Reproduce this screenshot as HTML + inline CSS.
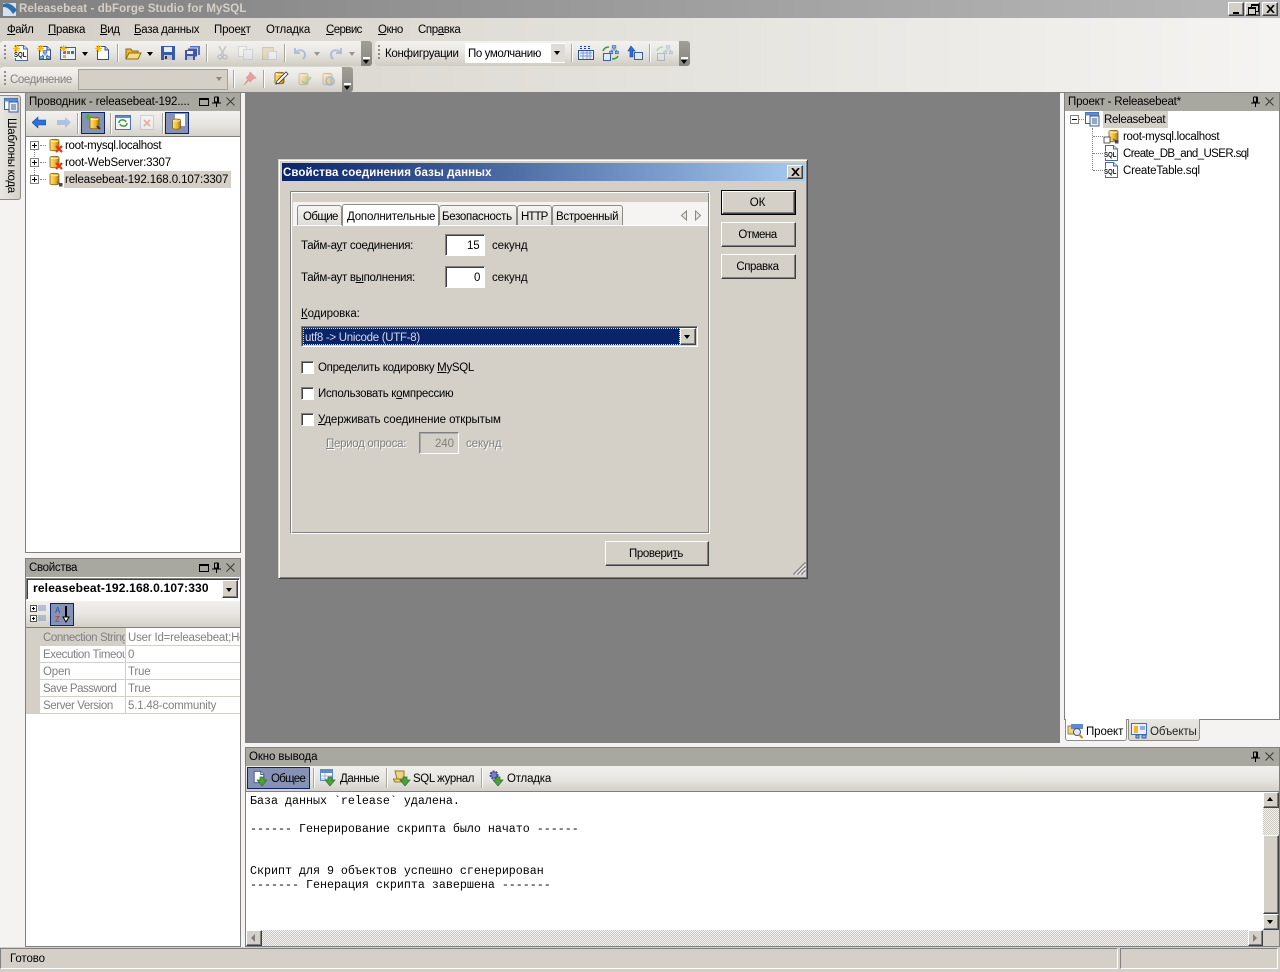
<!DOCTYPE html>
<html lang="ru"><head><meta charset="utf-8"><title>Releasebeat - dbForge Studio for MySQL</title>
<style>
html,body{margin:0;padding:0;width:1280px;height:972px;overflow:hidden;background:#f4f3f1}
body{position:relative;font:11.5px/14px "Liberation Sans","Noto Sans CJK SC",sans-serif;color:#000}
div,span.t,svg.i{position:absolute}
.t{position:absolute;white-space:nowrap;line-height:14px;letter-spacing:-.1px;margin-top:1px}
.t.s2{letter-spacing:-.2px}.t.s3{letter-spacing:-.3px}.t.s4{letter-spacing:-.4px}.t.s5{letter-spacing:-.5px}.t.s6{letter-spacing:-.6px}.t.s7{letter-spacing:-.7px}.t.s9{letter-spacing:-.9px}
.c{text-align:center}
.r{background:#d4d0c8;border:1px solid;border-color:#fff #404040 #404040 #fff;box-shadow:inset -1px -1px #808080;box-sizing:border-box}
.s{background:#fff;border:1px solid;border-color:#808080 #fff #fff #808080;box-shadow:inset 1px 1px #404040;box-sizing:border-box}
.tb{background:linear-gradient(#f3f2ef,#e9e7e2 45%,#cfccc3);border-radius:3px}
.cap{background:linear-gradient(#a09f98,#85847e);border-radius:0 3px 3px 0}
.ph{background:#a8a7a0;height:18px}
.pb{background:linear-gradient(#f1f0ed,#e8e6e1 50%,#d2cfc7);height:26px}
.sep{width:1px;background:#a6a49c;box-shadow:1px 0 #fff}
.act{background:#8592b5;border:1px solid #0a246a;box-sizing:border-box}
.pane{border:1px solid #808080;box-sizing:border-box;background:#fff}
.g{color:#808080}
.tab{background:linear-gradient(#f6f5f3,#dedcd6);border:1px solid #8d8c86;border-bottom:0;border-radius:3px 3px 0 0;box-sizing:border-box}
.cb{background:#fff;width:13px;height:13px;left:301px;box-sizing:border-box;border:1px solid;border-color:#808080 #fff #fff #808080;box-shadow:inset 1px 1px #404040}
.pl{width:9px;height:9px;border:1px solid #808080;background:#fff;box-sizing:border-box}
.pl:before{content:"";position:absolute;left:1px;top:3px;width:5px;height:1px;background:#000}
.pl.p:after{content:"";position:absolute;left:3px;top:1px;width:1px;height:5px;background:#000}
.dh{height:1px;border-top:1px dotted #808080}
.dv{width:1px;border-left:1px dotted #808080}
.ar{width:0;height:0;border:3.5px solid transparent;border-top:4px solid #000;border-bottom:0}
.row{left:26px;width:214px;height:1px;background:#d4d0c8}
.chk{background-color:#f4f3f1;background-image:linear-gradient(45deg,#c9c7c0 25%,transparent 25%,transparent 75%,#c9c7c0 75%),linear-gradient(45deg,#c9c7c0 25%,transparent 25%,transparent 75%,#c9c7c0 75%);background-size:2px 2px;background-position:0 0,1px 1px}
.t.mono{font:11.67px/14px "Liberation Mono",monospace;letter-spacing:0;left:250px;margin-top:0}
</style></head><body>
<svg width="0" height="0" style="position:absolute">
<defs>
<linearGradient id="y" x1="0" x2="1" y1="0" y2="0"><stop offset="0" stop-color="#ffe27a"/><stop offset=".6" stop-color="#eeb52e"/><stop offset="1" stop-color="#a8750c"/></linearGradient>
<symbol id="db" viewBox="0 0 16 16"><path d="M3 3.5C3 1.8 12 1.8 12 3.5V12.5C12 14.2 3 14.2 3 12.5Z" fill="url(#y)" stroke="#7d5c10" stroke-width=".8"/><path d="M3.5 3.6C5 5 10 5 11.5 3.6" fill="none" stroke="#fff3b8"/></symbol>
<symbol id="xr" viewBox="0 0 16 16"><path d="M9 9L15 15M15 9L9 15" stroke="#e8331c" stroke-width="2.2"/></symbol>
<symbol id="plug" viewBox="0 0 16 16"><path d="M10 11l3 2" stroke="#666" stroke-width="1.4"/><rect x="12" y="12" width="3.5" height="3.5" fill="#44475a"/></symbol>
<symbol id="doc" viewBox="0 0 16 16"><path d="M2.5 1.5H10L13.5 5V14.5H2.5Z" fill="#fff" stroke="#33507f"/><path d="M10 1.5V5H13.5" fill="#cdd8ea" stroke="#33507f"/></symbol>
<symbol id="sql" viewBox="0 0 16 16"><path d="M2.500 .5H10.500L14.500 4V15.500H2.500Z" fill="#fff" stroke="#4c6a9c"/><path d="M10.500 .5V4H14.500" fill="#cdd8ea" stroke="#4c6a9c"/><path d="M.5 6.500H13V13H.5Z" fill="#fff"/><text x="1" y="12" font-family="Liberation Sans" font-size="7" font-weight="bold" fill="#111" textLength="12.500" lengthAdjust="spacingAndGlyphs">SQL</text></symbol>
<symbol id="star" viewBox="0 0 8 8"><path d="M4 0V8M0 4H8M1 1L7 7M7 1L1 7" stroke="#f2b620" stroke-width="1.2"/></symbol>
<symbol id="out" viewBox="0 0 16 16"><path d="M5 9H8V6H12V9H15L10 15Z" fill="#4f9f3a" stroke="#2d6e2a" stroke-width=".7"/></symbol>
<symbol id="ftree" viewBox="0 0 16 16"><rect x="5" y="1" width="6" height="4" fill="#8fb4e8" stroke="#2f5fa8"/><rect x="1" y="10" width="5" height="4" fill="#8fb4e8" stroke="#2f5fa8"/><rect x="10" y="10" width="5" height="4" fill="#8fb4e8" stroke="#2f5fa8"/><path d="M8 5V8M3.500 10V8H12.500V10" fill="none" stroke="#2f5fa8"/></symbol>
<symbol id="win" viewBox="0 0 16 16"><rect x="1.500" y="1.500" width="13" height="11" fill="#fff" stroke="#3d5f96"/><rect x="1.500" y="1.500" width="13" height="3" fill="#5e8ad0"/><rect x="6" y="5" width="9" height="10" fill="#e9eff9" stroke="#3d5f96"/><path d="M8 8H13M8 10H13M8 12H13" stroke="#3d5f96"/></symbol>
</defs></svg>

<!-- title bar -->
<div style="left:0;top:0;width:1280px;height:18px;background:linear-gradient(90deg,#808080,#b9b9b9)"></div>
<svg class="i" style="left:2px;top:1px" width="16" height="16" viewBox="0 0 16 16"><rect x="1" y="2" width="13" height="13" fill="#d5e1ef"/><path d="M1 3C6 1 10 3 15 9L11 13C8 8 5 6 1 6Z" fill="#2c6fa8"/></svg>
<span class="t" style="left:19px;top:1px;font-weight:bold;font-size:11.5px;color:#d4d0c8;letter-spacing:.1px">Releasebeat - dbForge Studio for MySQL</span>
<div class="r" style="left:1228px;top:2px;width:16px;height:14px"><div style="left:4px;top:9px;width:6px;height:2px;background:#000"></div></div>
<div class="r" style="left:1245px;top:2px;width:15px;height:14px"><div style="left:5px;top:1px;width:6px;height:5px;border:1px solid #000;border-top-width:2px"></div><div style="left:2px;top:4px;width:6px;height:5px;border:1px solid #000;border-top-width:2px;background:#d4d0c8"></div></div>
<div class="r" style="left:1262px;top:2px;width:16px;height:14px"><svg class="i" style="left:3px;top:2px" width="9" height="8"><path d="M1 0L8 8M8 0L1 8" stroke="#000" stroke-width="1.7"/></svg></div>

<!-- menu / toolbar area -->
<div style="left:0;top:18px;width:1280px;height:74px;background:linear-gradient(90deg,#d4d0c8,#e2e0da 45%,#f5f4f2)"></div>
<span class="t s5" style="left:7px;top:22px"><u>Ф</u>айл</span>
<span class="t s3" style="left:48px;top:22px"><u>П</u>равка</span>
<span class="t s4" style="left:100px;top:22px"><u>В</u>ид</span>
<span class="t s3" style="left:134px;top:22px"><u>Б</u>аза данных</span>
<span class="t s2" style="left:214px;top:22px">Прое<u>к</u>т</span>
<span class="t s2" style="left:266px;top:22px">Отла<u>д</u>ка</span>
<span class="t s6" style="left:326px;top:22px"><u>С</u>ервис</span>
<span class="t s5" style="left:378px;top:22px"><u>О</u>кно</span>
<span class="t s4" style="left:418px;top:22px">Спр<u>а</u>вка</span>

<!-- toolbar 1 -->
<div class="tb" style="left:0;top:41px;width:362px;height:25px"></div>
<div class="cap" style="left:361px;top:41px;width:11px;height:25px"></div>
<div style="left:363px;top:57px;width:7px;height:2px;background:#fff"></div><div class="ar" style="left:363px;top:60px"></div>
<div style="left:4px;top:45px;width:2px;height:15px;background:repeating-linear-gradient(#8c8b85 0 2px,transparent 2px 4px)"></div>
<svg class="i" style="left:13px;top:45px" width="16" height="16"><use href="#sql"/></svg><svg class="i" style="left:13px;top:45px" width="7" height="7"><use href="#star"/></svg>
<svg class="i" style="left:37px;top:45px" width="16" height="16"><use href="#doc"/></svg><svg class="i" style="left:40px;top:50px" width="10" height="10"><use href="#ftree"/></svg><svg class="i" style="left:37px;top:45px" width="7" height="7"><use href="#star"/></svg>
<svg class="i" style="left:60px;top:46px" width="16" height="14"><rect x=".5" y="1.500" width="15" height="12" fill="#eef1f6" stroke="#3d5f96"/><rect x="3" y="5" width="3" height="3" fill="#e44"/><rect x="7" y="5" width="3" height="3" fill="#4a4"/><rect x="11" y="5" width="3" height="3" fill="#46c"/><rect x="3" y="9" width="3" height="3" fill="#ea3"/></svg><svg class="i" style="left:60px;top:45px" width="7" height="7"><use href="#star"/></svg>
<div class="ar" style="left:82px;top:52px"></div>
<svg class="i" style="left:95px;top:45px" width="16" height="16"><use href="#doc"/></svg><svg class="i" style="left:95px;top:45px" width="7" height="7"><use href="#star"/></svg>
<div class="sep" style="left:117px;top:44px;height:18px"></div>
<svg class="i" style="left:125px;top:45px" width="17" height="16"><path d="M1 4H6L7 6H13V14H1Z" fill="#eab63a" stroke="#8a6a14"/><path d="M1 14L4 8H16L13 14Z" fill="#f9dc7c" stroke="#8a6a14"/></svg>
<div class="ar" style="left:147px;top:52px"></div>
<svg class="i" style="left:161px;top:46px" width="14" height="14"><rect width="14" height="14" fill="#3d58a8"/><rect x="3" y="1" width="8" height="5" fill="#e8ecf6"/><rect x="3" y="9" width="8" height="5" fill="#bcc3d6"/><rect x="4" y="10" width="2" height="3" fill="#333"/></svg>
<svg class="i" style="left:185px;top:46px" width="15" height="14"><rect x="5" width="10" height="9" fill="#5a70b8"/><rect x="2.500" y="2" width="10" height="9" fill="#3d58a8" stroke="#dde"/><rect y="4" width="10" height="10" fill="#3d58a8"/><rect x="2" y="5" width="6" height="3" fill="#e8ecf6"/><rect x="2" y="10" width="6" height="4" fill="#bcc3d6"/></svg>
<div class="sep" style="left:206px;top:44px;height:18px"></div>
<svg class="i" style="left:217px;top:46px" width="11" height="14" opacity=".45"><path d="M2 0L7 9M9 0L4 9" stroke="#9a9a9a" stroke-width="1.500"/><circle cx="3" cy="11" r="2" fill="none" stroke="#8d93b0" stroke-width="1.300"/><circle cx="8" cy="11" r="2" fill="none" stroke="#8d93b0" stroke-width="1.300"/></svg>
<svg class="i" style="left:238px;top:46px" width="15" height="14" opacity=".4"><rect x=".5" y=".5" width="8" height="10" fill="#fff" stroke="#a9b6cf"/><rect x="5.500" y="3.500" width="9" height="10" fill="#eef" stroke="#a9b6cf"/></svg>
<svg class="i" style="left:262px;top:46px" width="15" height="14" opacity=".4"><rect x=".5" y="1.500" width="11" height="12" fill="#d9c68f" stroke="#aa9a6b"/><rect x="6.500" y="5.500" width="8" height="8" fill="#fff" stroke="#a9b6cf"/></svg>
<div class="sep" style="left:284px;top:44px;height:18px"></div>
<svg class="i" style="left:293px;top:47px" width="14" height="13" opacity=".5"><path d="M2 1V6H7M2 6C5 2 12 2 12 8C12 10 11 11 10 12" fill="none" stroke="#7c99cc" stroke-width="2"/></svg>
<div class="ar" style="left:314px;top:52px;opacity:.35"></div>
<svg class="i" style="left:329px;top:47px" width="14" height="13" opacity=".5"><path d="M12 1V6H7M12 6C9 2 2 2 2 8C2 10 3 11 4 12" fill="none" stroke="#7c99cc" stroke-width="2"/></svg>
<div class="ar" style="left:349px;top:52px;opacity:.35"></div>

<!-- toolbar 3 -->
<div class="tb" style="left:375px;top:41px;width:305px;height:25px"></div>
<div class="cap" style="left:679px;top:41px;width:11px;height:25px"></div>
<div style="left:681px;top:57px;width:7px;height:2px;background:#fff"></div><div class="ar" style="left:681px;top:60px"></div>
<div style="left:378px;top:45px;width:2px;height:15px;background:repeating-linear-gradient(#8c8b85 0 2px,transparent 2px 4px)"></div>
<span class="t s3" style="left:385px;top:46px">Конфигруации</span>
<div style="left:465px;top:43px;width:100px;height:20px;background:#fff"></div>
<span class="t s4" style="left:468px;top:46px">По умолчанию</span>
<div style="left:551px;top:44px;width:14px;height:18px;background:#dedcd6"></div><div class="ar" style="left:554px;top:51px"></div>
<div class="sep" style="left:571px;top:44px;height:18px"></div>
<svg class="i" style="left:578px;top:45px" width="16" height="16"><rect x=".5" y="5.500" width="15" height="9" fill="#e8eef8" stroke="#2f4f8f"/><path d="M2 8H14M2 11H14M5 6V14M9 6V14M12 6V14" stroke="#7f9ccf"/><path d="M3 1V5M7 1V5M11 1V5" stroke="#1c3f9a" stroke-width="2" stroke-dasharray="1 1"/></svg>
<svg class="i" style="left:602px;top:45px" width="17" height="16"><use href="#ftree" width="10" height="10" x="7"/><rect x="1.500" y="8.500" width="7" height="7" fill="#dfe8f6" stroke="#3d5f96"/><path d="M1 6C2 3 4 2 7 2" fill="none" stroke="#3d9a3a" stroke-width="1.500"/><path d="M10 14C13 14 15 13 16 11" fill="none" stroke="#3d9a3a" stroke-width="1.500"/></svg>
<svg class="i" style="left:627px;top:45px" width="17" height="16"><path d="M4 1L8 6H6V12H3V6H1Z" fill="#2f6fd8" stroke="#1c3f8a" stroke-width=".6"/><rect x="7.500" y="7.500" width="8" height="7" fill="#dfe8f6" stroke="#3d5f96"/></svg>
<div class="sep" style="left:649px;top:44px;height:18px"></div>
<svg class="i" style="left:656px;top:45px" width="17" height="16" opacity=".3"><use href="#ftree" width="10" height="10" x="7"/><rect x="1.500" y="8.500" width="7" height="7" fill="#dfe8f6" stroke="#3d5f96"/><path d="M1 6C2 3 4 2 7 2" fill="none" stroke="#3d9a3a" stroke-width="1.500"/></svg>

<!-- toolbar 2 -->
<div class="tb" style="left:0;top:67px;width:343px;height:25px"></div>
<div class="cap" style="left:342px;top:67px;width:11px;height:25px"></div>
<div style="left:344px;top:83px;width:7px;height:2px;background:#fff"></div><div class="ar" style="left:344px;top:86px"></div>
<div style="left:4px;top:71px;width:2px;height:15px;background:repeating-linear-gradient(#8c8b85 0 2px,transparent 2px 4px)"></div>
<span class="t g s4" style="left:10px;top:72px">Соединение</span>
<div style="left:78px;top:69px;width:150px;height:21px;background:#d4d0c8;border:1px solid #a3a199;box-sizing:border-box"></div>
<div class="ar" style="left:216px;top:77px;border-top-color:#8a8880"></div>
<div class="sep" style="left:233px;top:70px;height:18px"></div>
<svg class="i" style="left:242px;top:71px" width="15" height="15" opacity=".55"><path d="M8 1L14 7L11 8L8 11L7 9L2 14L6 8L4 7L7 4Z" fill="#e26a62" stroke="#b9504a" stroke-width=".6"/></svg>
<div class="sep" style="left:263px;top:70px;height:18px"></div>
<svg class="i" style="left:272px;top:70px" width="17" height="17"><use href="#db" width="16" height="16"/><path d="M5 11L14 2L16 4L7 13L4 14Z" fill="#fff" stroke="#333" stroke-width=".8"/></svg>
<svg class="i" style="left:296px;top:71px" width="16" height="16" opacity=".35"><use href="#db"/><path d="M6 10L9 13L15 6" fill="none" stroke="#4a9a3a" stroke-width="2"/></svg>
<svg class="i" style="left:320px;top:71px" width="16" height="16" opacity=".35"><use href="#db"/><circle cx="10" cy="10" r="4" fill="none" stroke="#4a7ac0" stroke-width="2"/></svg>

<!-- MDI area -->
<div style="left:245px;top:92px;width:815px;height:651px;background:#808080"></div>
<div style="left:0;top:92px;width:1280px;height:1px;background:#808080"></div>

<!-- left side tab -->
<div style="left:0;top:95px;width:21px;height:105px;background:linear-gradient(90deg,#e9e7e2,#d4d1c9);border:1px solid #8d8c86;border-left:0;border-radius:0 3px 3px 0;box-sizing:border-box"></div>
<svg class="i" style="left:3px;top:97px" width="16" height="16"><use href="#win"/></svg>
<span class="t s3" style="left:11px;top:117px;transform-origin:0 0;transform:translateX(7px) rotate(90deg)">Шаблоны кода</span>

<!-- explorer -->
<div class="pane" style="left:25px;top:92px;width:216px;height:461px"></div>
<div class="ph" style="left:26px;top:93px;width:214px"></div>
<span class="t" style="left:29px;top:94px">Проводник - releasebeat-192....</span>
<div style="left:199px;top:98px;width:8px;height:5px;border:1px solid #000;border-top-width:2px"></div>
<svg class="i" style="left:212px;top:96px" width="9" height="11"><path d="M2.500 1H6.500M2.500 1V6H6.500V1M0 7H9M4.500 7V11M5.500 1V6" fill="none" stroke="#000"/></svg>
<svg class="i" style="left:226px;top:97px" width="9" height="9"><path d="M.5 .5L8.500 8.500M8.500 .5L.5 8.500" stroke="#3a3a3a"/></svg>
<div class="pb" style="left:26px;top:111px;width:214px"></div>
<div style="left:26px;top:136px;width:214px;height:1px;background:#808080"></div>
<svg class="i" style="left:32px;top:116px" width="14" height="13"><path d="M0 6.500L6 1V4H14V9H6V12Z" fill="#2f6fd8" stroke="#1c4aa0" stroke-width=".6"/></svg>
<svg class="i" style="left:57px;top:116px" width="14" height="13" opacity=".3"><path d="M14 6.500L8 1V4H0V9H8V12Z" fill="#2f6fd8"/></svg>
<div class="sep" style="left:77px;top:113px;height:21px"></div>
<div class="act" style="left:81px;top:112px;width:24px;height:22px"></div>
<svg class="i" style="left:85px;top:113px" width="18" height="20"><use href="#db" x="2" y="2" width="16" height="16"/><path d="M3 1V7M0 4H6" stroke="#4ab030" stroke-width="2"/><path d="M12 13l3 3" stroke="#333" stroke-width="2"/></svg>
<div class="sep" style="left:110px;top:113px;height:21px"></div>
<svg class="i" style="left:115px;top:115px" width="16" height="15"><rect x=".5" y=".5" width="15" height="14" fill="#f4f6fb" stroke="#4f72a8"/><rect x="1" y="1" width="14" height="2" fill="#5e8ad0"/><path d="M4 8C4 4 10 4 11 7M12 8C12 12 6 12 5 9" fill="none" stroke="#3d9a3a" stroke-width="1.500"/></svg>
<svg class="i" style="left:140px;top:115px" width="14" height="15" opacity=".35"><rect x=".5" y=".5" width="13" height="14" fill="#fff" stroke="#8fa2c2"/><path d="M4 5L10 11M10 5L4 11" stroke="#d94030" stroke-width="1.600"/></svg>
<div class="sep" style="left:162px;top:113px;height:21px"></div>
<div class="act" style="left:165px;top:112px;width:24px;height:22px"></div>
<svg class="i" style="left:170px;top:114px" width="16" height="18"><rect x="5" y="0" width="10" height="12" fill="#fff"/><use href="#db" y="3" width="14" height="14"/></svg>

<div style="left:64px;top:171px;width:167px;height:17px;background:#d4d0c8"></div>
<div class="dv" style="left:34px;top:150px;height:25px"></div>
<div class="pl p" style="left:30px;top:141px"></div><div class="dh" style="left:40px;top:145px;width:6px"></div>
<div class="pl p" style="left:30px;top:158px"></div><div class="dh" style="left:40px;top:162px;width:6px"></div>
<div class="pl p" style="left:30px;top:175px"></div><div class="dh" style="left:40px;top:179px;width:6px"></div>
<svg class="i" style="left:47px;top:137px" width="16" height="16"><use href="#db"/><use href="#xr"/></svg>
<svg class="i" style="left:47px;top:154px" width="16" height="16"><use href="#db"/><use href="#xr"/></svg>
<svg class="i" style="left:47px;top:171px" width="16" height="16"><use href="#db"/><use href="#plug"/></svg>
<span class="t s3" style="left:65px;top:138px">root-mysql.localhost</span>
<span class="t s2" style="left:65px;top:155px">root-WebServer:3307</span>
<span class="t" style="left:65px;top:172px">releasebeat-192.168.0.107:3307</span>

<!-- properties -->
<div class="pane" style="left:25px;top:558px;width:216px;height:389px"></div>
<div class="ph" style="left:26px;top:559px;width:214px"></div>
<span class="t s3" style="left:29px;top:560px">Свойства</span>
<div style="left:199px;top:564px;width:8px;height:5px;border:1px solid #000;border-top-width:2px"></div>
<svg class="i" style="left:212px;top:562px" width="9" height="11"><path d="M2.500 1H6.500M2.500 1V6H6.500V1M0 7H9M4.500 7V11M5.500 1V6" fill="none" stroke="#000"/></svg>
<svg class="i" style="left:226px;top:563px" width="9" height="9"><path d="M.5 .5L8.500 8.500M8.500 .5L.5 8.500" stroke="#3a3a3a"/></svg>
<div class="s" style="left:26px;top:578px;width:214px;height:22px"></div>
<span class="t" style="left:33px;top:580px;font-weight:bold;font-size:12px;letter-spacing:.17px">releasebeat-192.168.0.107:330</span>
<div class="r" style="left:222px;top:580px;width:16px;height:18px"></div><div class="ar" style="left:226px;top:588px"></div>
<div class="pb" style="left:26px;top:601px;width:214px"></div>
<div style="left:26px;top:627px;width:214px;height:1px;background:#808080"></div>
<svg class="i" style="left:30px;top:605px" width="17" height="18"><rect x=".5" y=".5" width="6" height="6" fill="#fff" stroke="#555"/><rect x=".5" y="10.500" width="6" height="6" fill="#fff" stroke="#555"/><path d="M2 3.500H5M3.500 2V5M2 13.500H5M3.500 12V15" stroke="#000"/><path d="M8 1H16M8 3H16M8 5H16M8 11H16M8 13H16M8 15H16" stroke="#7f93b8"/></svg>
<div class="act" style="left:50px;top:603px;width:24px;height:23px"></div>
<svg class="i" style="left:54px;top:605px" width="17" height="19"><text x="1" y="8" font-family="Liberation Sans" font-size="8" fill="#2a4fa0">A</text><text x="1" y="17" font-family="Liberation Sans" font-size="8" fill="#b03a20">Z</text><path d="M12 1V13" stroke="#000" stroke-width="2"/><path d="M9 12H15L12 17Z" fill="#fff" stroke="#000"/></svg>

<div style="left:26px;top:628px;width:14px;height:86px;background:#d4d0c8"></div>
<div style="left:26px;top:628px;width:99px;height:17px;background:#d4d0c8"></div>
<div style="left:125px;top:628px;width:1px;height:86px;background:#d4d0c8"></div>
<div class="row" style="top:645px"></div><div class="row" style="top:662px"></div><div class="row" style="top:679px"></div><div class="row" style="top:696px"></div><div class="row" style="top:713px"></div>
<div class="t g s4" style="left:43px;top:630px;width:82px;overflow:hidden">Connection String</div>
<div class="t g s2" style="left:128px;top:630px;width:112px;overflow:hidden">User Id=releasebeat;Hos</div>
<div class="t g s4" style="left:43px;top:647px;width:82px;overflow:hidden">Execution Timeout</div>
<span class="t g" style="left:128px;top:647px">0</span>
<span class="t g s2" style="left:43px;top:664px">Open</span><span class="t g s2" style="left:128px;top:664px">True</span>
<span class="t g s5" style="left:43px;top:681px">Save Password</span><span class="t g s2" style="left:128px;top:681px">True</span>
<span class="t g s4" style="left:43px;top:698px">Server Version</span><span class="t g s2" style="left:128px;top:698px">5.1.48-community</span>

<!-- project -->
<div class="pane" style="left:1064px;top:92px;width:216px;height:628px"></div>
<div class="ph" style="left:1065px;top:93px;width:214px"></div>
<span class="t s2" style="left:1068px;top:94px">Проект - Releasebeat*</span>
<svg class="i" style="left:1251px;top:96px" width="9" height="11"><path d="M2.500 1H6.500M2.500 1V6H6.500V1M0 7H9M4.500 7V11M5.500 1V6" fill="none" stroke="#000"/></svg>
<svg class="i" style="left:1265px;top:97px" width="9" height="9"><path d="M.5 .5L8.500 8.500M8.500 .5L.5 8.500" stroke="#3a3a3a"/></svg>
<div style="left:1103px;top:111px;width:65px;height:17px;background:#d4d0c8"></div>
<div class="pl" style="left:1070px;top:115px"></div><div class="dh" style="left:1079px;top:119px;width:5px"></div>
<svg class="i" style="left:1084px;top:111px" width="16" height="16"><use href="#win"/></svg>
<span class="t s3" style="left:1104px;top:112px">Releasebeat</span>
<div class="dv" style="left:1092px;top:128px;height:42px"></div>
<div class="dh" style="left:1093px;top:136px;width:10px"></div><div class="dh" style="left:1093px;top:153px;width:10px"></div><div class="dh" style="left:1093px;top:170px;width:10px"></div>
<svg class="i" style="left:1103px;top:128px" width="16" height="16"><use href="#db" x="3"/><use href="#plug"/><rect x="1" y="9" width="6" height="6" fill="#fff" stroke="#333" stroke-width=".8"/></svg>
<svg class="i" style="left:1103px;top:145px" width="16" height="16"><use href="#sql"/></svg>
<svg class="i" style="left:1103px;top:162px" width="16" height="16"><use href="#sql"/></svg>
<span class="t s3" style="left:1123px;top:129px">root-mysql.localhost</span>
<span class="t s6" style="left:1123px;top:146px">Create_DB_and_USER.sql</span>
<span class="t s2" style="left:1123px;top:163px">CreateTable.sql</span>
<!-- project tabs -->
<div style="left:1128px;top:719px;width:72px;height:22px;background:linear-gradient(#e9e7e2,#dbd9d2);border:1px solid #8d8c86;border-top:0;border-radius:0 0 3px 3px;box-sizing:border-box"></div>
<div style="left:1065px;top:719px;width:62px;height:22px;background:#fff;border:1px solid #8d8c86;border-top:0;border-radius:0 0 3px 3px;box-sizing:border-box"></div>
<svg class="i" style="left:1067px;top:723px" width="17" height="16"><path d="M1 3H5L6 5H12V11H1Z" fill="#eed37e" stroke="#9a8240"/><rect x="4" y="1" width="12" height="5" fill="#5e8ad0"/><circle cx="10" cy="9" r="3.500" fill="#dfe8f6" stroke="#555"/><path d="M12 11.500L15.500 15" stroke="#b78a20" stroke-width="2"/></svg>
<span class="t" style="left:1086px;top:724px">Проект</span>
<svg class="i" style="left:1131px;top:723px" width="16" height="16"><rect x=".5" y=".5" width="15" height="11" fill="#e9effa" stroke="#3d6fc0"/><rect x="3" y="3" width="4" height="7" fill="#eeb52e"/><path d="M9 4H14M9 6H14" stroke="#3d6fc0"/><rect x="5" y="12" width="3" height="3" fill="#8fb4e8" stroke="#2f5fa8"/><rect x="11" y="12" width="4" height="3" fill="#8fb4e8" stroke="#2f5fa8"/></svg>
<span class="t" style="left:1150px;top:724px;color:#222">Объекты</span>

<!-- output -->
<div class="pane" style="left:245px;top:747px;width:1035px;height:200px"></div>
<div class="ph" style="left:246px;top:748px;width:1033px"></div>
<span class="t" style="left:249px;top:749px">Окно вывода</span>
<svg class="i" style="left:1251px;top:751px" width="9" height="11"><path d="M2.500 1H6.500M2.500 1V6H6.500V1M0 7H9M4.500 7V11M5.500 1V6" fill="none" stroke="#000"/></svg>
<svg class="i" style="left:1265px;top:752px" width="9" height="9"><path d="M.5 .5L8.500 8.500M8.500 .5L.5 8.500" stroke="#3a3a3a"/></svg>
<div class="pb" style="left:246px;top:766px;width:1033px"></div>
<div style="left:246px;top:791px;width:1033px;height:1px;background:#808080"></div>
<div class="act" style="left:247px;top:767px;width:63px;height:22px"></div>
<svg class="i" style="left:252px;top:769px" width="17" height="18"><use href="#doc" width="14" height="16"/><use href="#out" y="2" width="16" height="16"/></svg>
<span class="t s7" style="left:271px;top:771px">Общее</span>
<div class="sep" style="left:313px;top:768px;height:20px"></div>
<svg class="i" style="left:320px;top:769px" width="17" height="18"><rect x=".5" y=".5" width="12" height="11" fill="#fff" stroke="#5e8ad0"/><rect x="1" y="1" width="12" height="3" fill="#5e8ad0"/><path d="M1 7H12M1 10H12M5 4V12" stroke="#9fb6dd"/><use href="#out" y="2" width="16" height="16"/></svg>
<span class="t s4" style="left:340px;top:771px">Данные</span>
<div class="sep" style="left:386px;top:768px;height:20px"></div>
<svg class="i" style="left:393px;top:769px" width="18" height="18"><path d="M2 2H11V10H4Z" fill="#ecd57f" stroke="#917a2a"/><path d="M0 10H8V13H2Z" fill="#ecd57f" stroke="#917a2a"/><use href="#out" x="2" y="2" width="16" height="16"/></svg>
<span class="t s4" style="left:413px;top:771px">SQL журнал</span>
<div class="sep" style="left:481px;top:768px;height:20px"></div>
<svg class="i" style="left:488px;top:769px" width="17" height="18"><circle cx="6" cy="6" r="3.500" fill="#7480c8" stroke="#3c4690" stroke-width="2" stroke-dasharray="2 1"/><use href="#out" y="2" width="16" height="16"/></svg>
<span class="t s2" style="left:507px;top:771px">Отладка</span>
<span class="t mono" style="top:794px">База данных `release` удалена.</span>
<span class="t mono" style="top:822px">------ Генерирование скрипта было начато ------</span>
<span class="t mono" style="top:864px">Скрипт для 9 объектов успешно сгенерирован</span>
<span class="t mono" style="top:878px">------- Генерация скрипта завершена -------</span>
<!-- scrollbars -->
<div class="chk" style="left:1263px;top:792px;width:16px;height:138px"></div>
<div class="r" style="left:1263px;top:792px;width:16px;height:16px"></div><div style="left:1267px;top:797px;width:0;height:0;border:3.5px solid transparent;border-bottom:4px solid #000;border-top:0"></div>
<div class="r" style="left:1263px;top:835px;width:16px;height:79px"></div>
<div class="r" style="left:1263px;top:914px;width:16px;height:16px"></div><div class="ar" style="left:1267px;top:920px"></div>
<div class="chk" style="left:246px;top:930px;width:1017px;height:16px"></div>
<div class="r" style="left:246px;top:930px;width:16px;height:16px"></div><div style="left:251px;top:934px;width:0;height:0;border:4px solid transparent;border-right:4px solid #808080;border-left:0"></div>
<div class="r" style="left:1248px;top:930px;width:15px;height:16px"></div><div style="left:1253px;top:934px;width:0;height:0;border:4px solid transparent;border-left:4px solid #808080;border-right:0"></div>
<div style="left:1263px;top:930px;width:16px;height:16px;background:#d4d0c8"></div>

<!-- status -->
<div style="left:0;top:947px;width:1280px;height:25px;background:#d4d0c8"></div>
<div style="left:0;top:948px;width:1118px;height:21px;border:1px solid;border-color:#808080 #fff #fff #808080;box-sizing:border-box"></div>
<div style="left:1120px;top:948px;width:158px;height:21px;border:1px solid;border-color:#808080 #fff #fff #808080;box-sizing:border-box"></div>
<span class="t" style="left:10px;top:951px">Готово</span>

<!-- dialog -->
<div style="left:278px;top:159px;width:530px;height:420px;background:#d4d0c8;box-sizing:border-box;border:1px solid;border-color:#d4d0c8 #404040 #404040 #d4d0c8;box-shadow:inset 1px 1px #fff,inset -1px -1px #808080"></div>
<div style="left:282px;top:163px;width:523px;height:18px;background:linear-gradient(90deg,#0a246a,#a6caf0)"></div>
<span class="t" style="left:283px;top:165px;color:#fff;font-weight:bold;font-size:11.5px;letter-spacing:.1px">Свойства соединения базы данных</span>
<div class="r" style="left:787px;top:165px;width:16px;height:14px"><svg class="i" style="left:3px;top:2px" width="9" height="8"><path d="M1 0L8 8M8 0L1 8" stroke="#000" stroke-width="1.700"/></svg></div>
<div style="left:290px;top:191px;width:420px;height:343px;box-sizing:border-box;border:1px solid;border-color:#808080 #fff #fff #808080;box-shadow:inset 1px 1px #fff,inset -1px -1px #808080"></div>
<div style="left:293px;top:202px;width:415px;height:23px;background:#f5f4f2;border-bottom:1px solid #fff"></div>
<div class="tab" style="left:297px;top:205px;width:45px;height:20px"></div>
<div class="tab" style="left:342px;top:204px;width:97px;height:22px;background:#fff"></div>
<div class="tab" style="left:439px;top:205px;width:78px;height:20px"></div>
<div class="tab" style="left:517px;top:205px;width:35px;height:20px"></div>
<div class="tab" style="left:552px;top:205px;width:71px;height:20px"></div>
<span class="t s6" style="left:303px;top:209px">Общие</span>
<span class="t s2" style="left:347px;top:209px">Дополнительные</span>
<span class="t s3" style="left:442px;top:209px">Безопасность</span>
<span class="t s9" style="left:521px;top:209px">HTTP</span>
<span class="t s3" style="left:556px;top:209px">Встроенный</span>
<svg class="i" style="left:680px;top:210px" width="22" height="11"><path d="M6.500 1L1.500 5.500L6.500 10Z M15.500 1L20.500 5.500L15.500 10Z" fill="#e8e6e0" stroke="#8a8880"/></svg>

<span class="t s3" style="left:301px;top:238px">Тайм-а<u>у</u>т соединения:</span>
<div class="s" style="left:445px;top:234px;width:40px;height:22px"></div>
<span class="t" style="left:467px;top:238px">15</span>
<span class="t" style="left:492px;top:238px">секунд</span>
<span class="t s3" style="left:301px;top:270px">Тайм-аут в<u>ы</u>полнения:</span>
<div class="s" style="left:445px;top:266px;width:40px;height:22px"></div>
<span class="t" style="left:474px;top:270px">0</span>
<span class="t" style="left:492px;top:270px">секунд</span>
<span class="t" style="left:301px;top:306px"><u>К</u>одировка:</span>
<div class="s" style="left:301px;top:326px;width:397px;height:21px;background:#d4d0c8"></div>
<div style="left:303px;top:328px;width:377px;height:17px;background:#0a246a;outline:1px dotted #f1e28a;outline-offset:-1px"></div>
<span class="t s3" style="left:305px;top:330px;color:#d4d8ea">utf8 -&gt; Unicode (UTF-8)</span>
<div class="r" style="left:680px;top:328px;width:16px;height:17px"></div><div class="ar" style="left:684px;top:335px"></div>

<div class="cb" style="top:361px"></div><span class="t s3" style="left:318px;top:360px">Определить кодировку <u>M</u>ySQL</span>
<div class="cb" style="top:387px"></div><span class="t s3" style="left:318px;top:386px">Использовать к<u>о</u>мпрессию</span>
<div class="cb" style="top:413px"></div><span class="t" style="left:318px;top:412px"><u>У</u>держивать соединение открытым</span>
<span class="t g s3" style="left:326px;top:436px;text-shadow:1px 1px #fff"><u>П</u>ериод опроса:</span>
<div style="left:419px;top:432px;width:40px;height:22px;background:#d4d0c8;box-sizing:border-box;border:1px solid;border-color:#808080 #fff #fff #808080;box-shadow:inset 1px 1px #aaa"></div>
<span class="t g" style="left:435px;top:436px">240</span>
<span class="t g" style="left:466px;top:436px;text-shadow:1px 1px #fff">секунд</span>

<div style="left:721px;top:190px;width:75px;height:25px;background:#000"></div>
<div class="r" style="left:722px;top:191px;width:73px;height:23px"></div>
<span class="t c" style="left:721px;top:195px;width:73px">ОК</span>
<div class="r" style="left:721px;top:222px;width:75px;height:25px"></div>
<span class="t c s5" style="left:721px;top:227px;width:73px">Отмена</span>
<div class="r" style="left:721px;top:254px;width:75px;height:25px"></div>
<span class="t c s4" style="left:721px;top:259px;width:73px">Справка</span>
<div class="r" style="left:605px;top:541px;width:104px;height:25px"></div>
<span class="t c s4" style="left:605px;top:546px;width:102px">Провери<u>т</u>ь</span>
<svg class="i" style="left:792px;top:561px" width="14" height="14"><path d="M1.500 13.500L13.500 1.500M5.500 13.500L13.500 5.500M9.500 13.500L13.500 9.500" stroke="#808080" stroke-width="1.500"/><path d="M3 13.500L13.500 3M7 13.500L13.500 7M11 13.500L13.500 11" stroke="#fff" stroke-width=".8"/></svg>
</body></html>
